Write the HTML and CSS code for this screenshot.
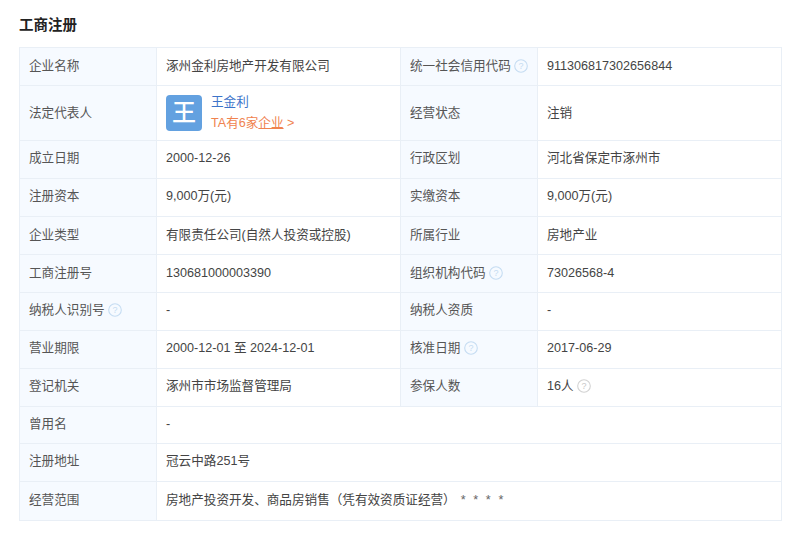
FILE: index.html
```html
<!DOCTYPE html>
<html lang="zh-CN">
  <head>
    <meta charset="UTF-8" />
    <title>工商注册</title>
    <link rel="stylesheet" href="styles.css">
  </head>
  <body>
    <h3 class="section-title">工商注册</h3>
    <table class="info-table">
      <colgroup>
        <col class="col-label" />
        <col class="col-value" />
        <col class="col-label" />
        <col class="col-value" />
      </colgroup>
      <tr class="row-low">
        <td class="label">企业名称</td>
        <td>涿州金利房地产开发有限公司</td>
        <td class="label">统一社会信用代码 <svg class="help help-blue" viewBox="0 0 14 14"><circle cx="7" cy="7" r="6.3"/><text x="7" y="10.2">?</text></svg></td>
        <td>911306817302656844</td>
      </tr>
      <tr class="row-tall">
        <td class="label">法定代表人</td>
        <td>
          <div class="person">
            <div class="avatar">王</div>
            <div class="person-info">
              <a class="person-name">王金利</a>
              <a class="person-link">TA有6家<span class="underline">企业</span> &gt;</a>
            </div>
          </div>
        </td>
        <td class="label">经营状态</td>
        <td>注销</td>
      </tr>
      <tr>
        <td class="label">成立日期</td>
        <td>2000-12-26</td>
        <td class="label">行政区划</td>
        <td>河北省保定市涿州市</td>
      </tr>
      <tr>
        <td class="label">注册资本</td>
        <td>9,000万(元)</td>
        <td class="label">实缴资本</td>
        <td>9,000万(元)</td>
      </tr>
      <tr class="row-low">
        <td class="label">企业类型</td>
        <td>有限责任公司(自然人投资或控股)</td>
        <td class="label">所属行业</td>
        <td>房地产业</td>
      </tr>
      <tr class="row-low">
        <td class="label">工商注册号</td>
        <td>130681000003390</td>
        <td class="label">组织机构代码 <svg class="help help-blue" viewBox="0 0 14 14"><circle cx="7" cy="7" r="6.3"/><text x="7" y="10.2">?</text></svg></td>
        <td>73026568-4</td>
      </tr>
      <tr>
        <td class="label">纳税人识别号 <svg class="help help-blue" viewBox="0 0 14 14"><circle cx="7" cy="7" r="6.3"/><text x="7" y="10.2">?</text></svg></td>
        <td>-</td>
        <td class="label">纳税人资质</td>
        <td>-</td>
      </tr>
      <tr>
        <td class="label">营业期限</td>
        <td>2000-12-01 至 2024-12-01</td>
        <td class="label">核准日期 <svg class="help help-blue" viewBox="0 0 14 14"><circle cx="7" cy="7" r="6.3"/><text x="7" y="10.2">?</text></svg></td>
        <td>2017-06-29</td>
      </tr>
      <tr>
        <td class="label">登记机关</td>
        <td>涿州市市场监督管理局</td>
        <td class="label">参保人数</td>
        <td>16人 <svg class="help help-grey" viewBox="0 0 14 14"><circle cx="7" cy="7" r="6.3"/><text x="7" y="10.2">?</text></svg></td>
      </tr>
      <tr class="row-short">
        <td class="label">曾用名</td>
        <td colspan="3">-</td>
      </tr>
      <tr>
        <td class="label">注册地址</td>
        <td colspan="3">冠云中路251号</td>
      </tr>
      <tr class="row-last">
        <td class="label">经营范围</td>
        <td colspan="3">房地产投资开发、商品房销售（凭有效资质证经营）<span class="stars">****</span></td>
      </tr>
    </table>
  </body>
</html>
```
FILE: styles.css
```css
body {
  margin: 0;
  padding: 0 18px 0 19px;
  font-family: "Liberation Sans", "Noto Sans CJK SC", sans-serif;
  font-size: 12.6px;
  color: #444;
  background: #fff;
}
.section-title {
  margin: 0;
  padding-top: 17px;
  height: 30px;
  line-height: 16px;
  font-size: 14.5px;
  font-weight: bold;
  color: #222;
}
.info-table {
  width: 763px;
  border-collapse: collapse;
  table-layout: fixed;
}
.col-label {
  width: 137px;
}
.info-table td {
  height: 38px;
  padding: 0 9px 3px;
  border: 1px solid #e9eff6;
  box-sizing: border-box;
  line-height: 18px;
  white-space: nowrap;
}
.info-table td.label {
  background: #f6faff;
  color: #555;
}
.info-table .row-low td {
  padding-bottom: 1px;
}
.info-table .row-tall td {
  height: 55px;
  padding-bottom: 1px;
}
.info-table .row-short td {
  height: 37px;
}
.info-table .row-last td {
  height: 39px;
}
.person {
  display: flex;
  align-items: center;
}
.avatar {
  width: 36px;
  height: 36px;
  border-radius: 4px;
  background: #63a1e0;
  color: #fff;
  font-size: 24px;
  font-weight: 500;
  line-height: 36px;
  text-align: center;
  margin-right: 9px;
}
.person-info {
  display: flex;
  flex-direction: column;
  gap: 3px;
}
.person-name {
  color: #3d74c9;
}
.person-link {
  color: #f0834f;
}
.underline {
  text-decoration: underline;
}
.stars {
  margin-left: 5px;
  letter-spacing: 7.7px;
  color: #666;
}
.help {
  width: 14px;
  height: 14px;
  vertical-align: -3px;
}
.help circle {
  fill: none;
  stroke-width: 1.1;
}
.help text {
  font-family: "Liberation Sans", sans-serif;
  font-size: 9px;
  text-anchor: middle;
}
.help-blue circle {
  stroke: #c5dcf2;
}
.help-blue text {
  fill: #c5dcf2;
}
.help-grey circle {
  stroke: #d2d2d2;
}
.help-grey text {
  fill: #c8c8c8;
}
```
